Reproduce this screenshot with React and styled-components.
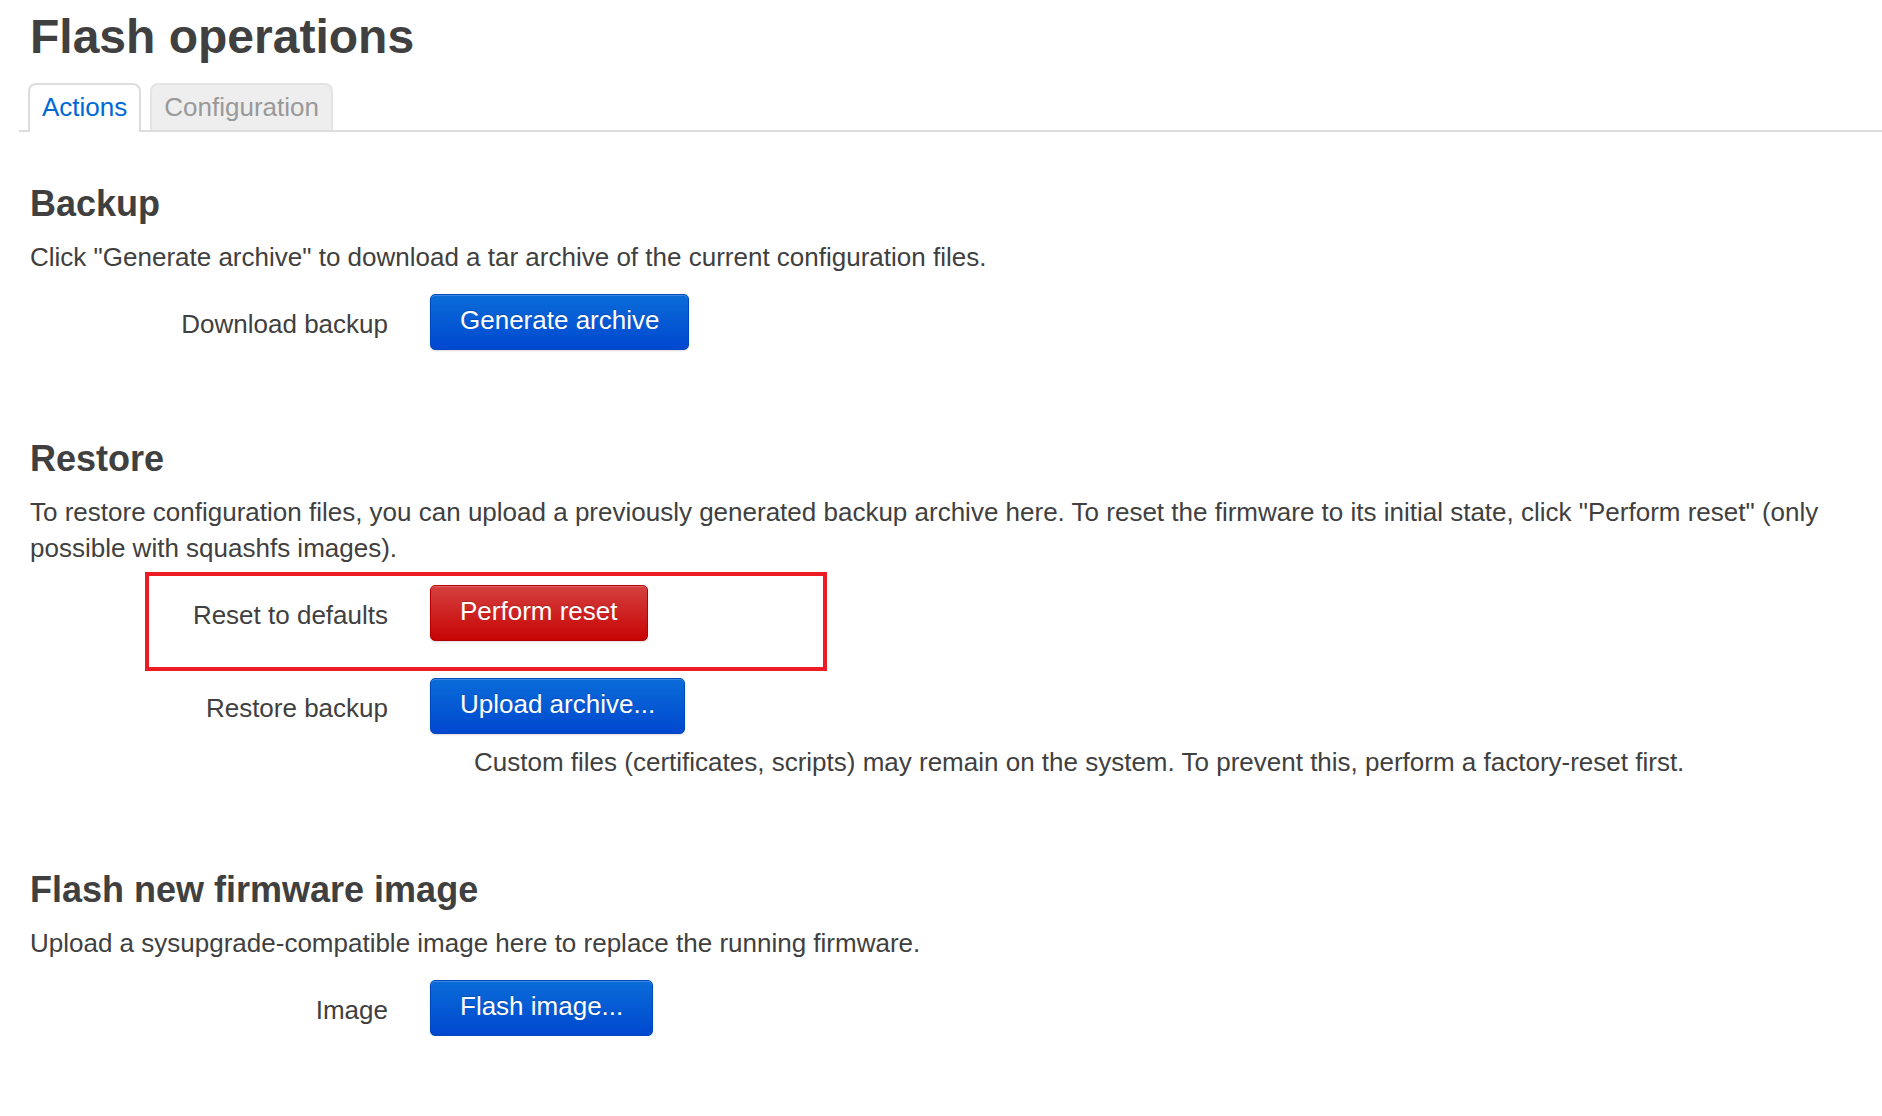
import React from 'react'
import styled, { createGlobalStyle } from 'styled-components'

const Global = createGlobalStyle`
body{
  margin:0;
  background:#fff;
  font-family:"Liberation Sans", Arial, sans-serif;
  color:#404040;
}
`

const Page = styled.div`
padding:0 30px 0 30px;
`

const Title = styled.h2`
margin:0;
padding-top:8px;
font-size:48px;
line-height:58px;
font-weight:bold;
color:#404040;
`

const Tabs = styled.ul`
display:flex;
gap:9px;
list-style:none;
margin:17px -30px 0 -11px;
padding:0 0 0 9px;
border-bottom:2px solid #ddd;
`

const Tab = styled.li`
font-size:26px;
line-height:32px;
padding:6px 12px 7px;
border:2px solid ${props=>props.active ? '#ddd' : '#e4e4e4'};
border-bottom:none;
border-radius:8px 8px 0 0;
margin-bottom:${props=>props.active ? '-2px' : '0'};
background:${props=>props.active ? '#fff' : '#eee'};
color:${props=>props.active ? '#0069d6' : '#999'};
`

const Section = styled.section`
margin-top:${props=>props.top||'0'};
`

const Heading = styled.h3`
margin:0;
font-size:36px;
line-height:43px;
font-weight:bold;
color:#404040;
`

const Desc = styled.p`
margin:14px 0 0;
font-size:26px;
line-height:36px;
`

const Row = styled.div`
position:relative;
display:grid;
grid-template-columns:358px auto;
column-gap:42px;
align-items:center;
justify-items:start;
margin-top:${props=>props.top||'19px'};
`

const Label = styled.div`
justify-self:end;
font-size:26px;
line-height:36px;
padding-top:4px;
`

const Button = styled.button`
font-family:inherit;
font-size:26px;
line-height:31px;
color:#fff;
padding:10px 29px 13px;
border-radius:5px;
cursor:pointer;
text-shadow:0 -1px 0 rgba(0,0,0,.2);
box-shadow:inset 0 1px 0 rgba(255,255,255,.2), 0 1px 2px rgba(0,0,0,.15);
border:1px solid ${props=>props.danger ? '#b40000' : '#0048c0'};
background:${props=>props.danger
  ? 'linear-gradient(to bottom, #d4403f, #c80404)'
  : 'linear-gradient(to bottom, #0a6cd8, #0048d0)'};
`

const Note = styled.div`
grid-column:2;
margin:10px 0 0 44px;
font-size:26px;
line-height:36px;
`

const Highlight = styled.div`
position:absolute;
left:115px;
top:-13px;
width:682px;
height:99px;
box-sizing:border-box;
border:4px solid #ed1c24;
pointer-events:none;
`

const Spacer = styled.div``

const App = () => {
  return <>
    <Global />
    <Page>
      <Title>Flash operations</Title>
      <Tabs>
        <Tab active>Actions</Tab>
        <Tab>Configuration</Tab>
      </Tabs>

      <Section top="50px">
        <Heading>Backup</Heading>
        <Desc>Click "Generate archive" to download a tar archive of the current configuration files.</Desc>
        <Row>
          <Label>Download backup</Label>
          <Button>Generate archive</Button>
        </Row>
      </Section>

      <Section top="87px">
        <Heading>Restore</Heading>
        <Desc>To restore configuration files, you can upload a previously generated backup archive here. To reset the firmware to its initial state, click "Perform reset" (only possible with squashfs images).</Desc>
        <Row>
          <Label>Reset to defaults</Label>
          <Button danger>Perform reset</Button>
          <Highlight />
        </Row>
        <Row top="37px">
          <Label>Restore backup</Label>
          <Button>Upload archive...</Button>
        </Row>
        <Row top="0">
          <Spacer />
          <Note>Custom files (certificates, scripts) may remain on the system. To prevent this, perform a factory-reset first.</Note>
        </Row>
      </Section>

      <Section top="88px">
        <Heading>Flash new firmware image</Heading>
        <Desc>Upload a sysupgrade-compatible image here to replace the running firmware.</Desc>
        <Row>
          <Label>Image</Label>
          <Button>Flash image...</Button>
        </Row>
      </Section>
    </Page>
  </>
}

export default App
